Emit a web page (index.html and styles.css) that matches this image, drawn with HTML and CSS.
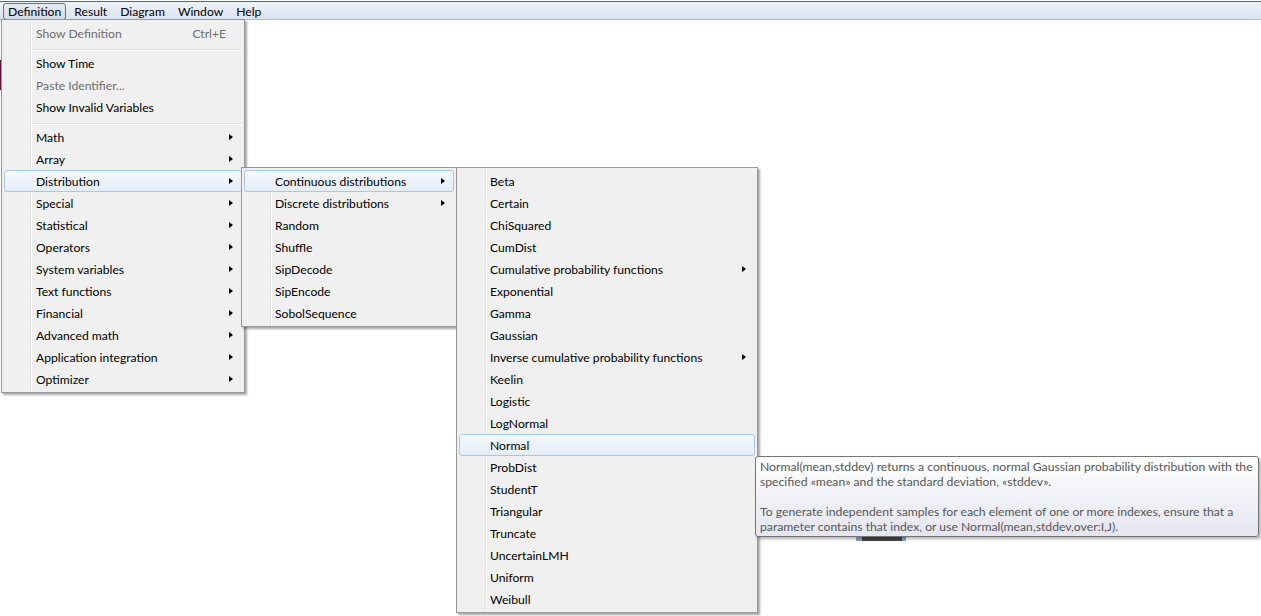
FILE: index.html
```html
<!DOCTYPE html>
<html lang="en">
<head>
    <meta charset="UTF-8">
    <meta name="viewport" content="width=device-width, initial-scale=1.0">
    <title>Definition menu</title>
    <link rel="stylesheet" href="styles.css">
</head>
<body>
    <div class="menubar">
        <div class="mb-item open">Definition</div>
        <div class="mb-item">Result</div>
        <div class="mb-item">Diagram</div>
        <div class="mb-item">Window</div>
        <div class="mb-item">Help</div>
    </div>

    <!-- bits of the diagram window peeking out behind the menus -->
    <div class="bg-strip"></div>
    <div class="bg-node"></div>

    <div class="menu main">
        <div class="item disabled"><span class="label">Show Definition</span><span class="key">Ctrl+E</span></div>
        <div class="sep"></div>
        <div class="item"><span class="label">Show Time</span></div>
        <div class="item disabled"><span class="label">Paste Identifier...</span></div>
        <div class="item"><span class="label">Show Invalid Variables</span></div>
        <div class="sep"></div>
        <div class="item sub"><span class="label">Math</span><span class="arrow"></span></div>
        <div class="item sub"><span class="label">Array</span><span class="arrow"></span></div>
        <div class="item sub hover"><span class="label">Distribution</span><span class="arrow"></span></div>
        <div class="item sub"><span class="label">Special</span><span class="arrow"></span></div>
        <div class="item sub"><span class="label">Statistical</span><span class="arrow"></span></div>
        <div class="item sub"><span class="label">Operators</span><span class="arrow"></span></div>
        <div class="item sub"><span class="label">System variables</span><span class="arrow"></span></div>
        <div class="item sub"><span class="label">Text functions</span><span class="arrow"></span></div>
        <div class="item sub"><span class="label">Financial</span><span class="arrow"></span></div>
        <div class="item sub"><span class="label">Advanced math</span><span class="arrow"></span></div>
        <div class="item sub"><span class="label">Application integration</span><span class="arrow"></span></div>
        <div class="item sub"><span class="label">Optimizer</span><span class="arrow"></span></div>
    </div>

    <div class="menu sub1">
        <div class="item sub hover"><span class="label">Continuous distributions</span><span class="arrow"></span></div>
        <div class="item sub"><span class="label">Discrete distributions</span><span class="arrow"></span></div>
        <div class="item"><span class="label">Random</span></div>
        <div class="item"><span class="label">Shuffle</span></div>
        <div class="item"><span class="label">SipDecode</span></div>
        <div class="item"><span class="label">SipEncode</span></div>
        <div class="item"><span class="label">SobolSequence</span></div>
    </div>

    <div class="menu sub2">
        <div class="item"><span class="label">Beta</span></div>
        <div class="item"><span class="label">Certain</span></div>
        <div class="item"><span class="label">ChiSquared</span></div>
        <div class="item"><span class="label">CumDist</span></div>
        <div class="item sub"><span class="label">Cumulative probability functions</span><span class="arrow"></span></div>
        <div class="item"><span class="label">Exponential</span></div>
        <div class="item"><span class="label">Gamma</span></div>
        <div class="item"><span class="label">Gaussian</span></div>
        <div class="item sub"><span class="label">Inverse cumulative probability functions</span><span class="arrow"></span></div>
        <div class="item"><span class="label">Keelin</span></div>
        <div class="item"><span class="label">Logistic</span></div>
        <div class="item"><span class="label">LogNormal</span></div>
        <div class="item hover"><span class="label">Normal</span></div>
        <div class="item"><span class="label">ProbDist</span></div>
        <div class="item"><span class="label">StudentT</span></div>
        <div class="item"><span class="label">Triangular</span></div>
        <div class="item"><span class="label">Truncate</span></div>
        <div class="item"><span class="label">UncertainLMH</span></div>
        <div class="item"><span class="label">Uniform</span></div>
        <div class="item"><span class="label">Weibull</span></div>
    </div>

    <div class="tooltip">
        <p>Normal(mean,stddev) returns a continuous, normal Gaussian probability distribution with the<br>specified «mean» and the standard deviation, «stddev».</p>
        <p>To generate independent samples for each element of one or more indexes, ensure that a<br>parameter contains that index, or use Normal(mean,stddev,over:I,J).</p>
    </div>
</body>
</html>
```

FILE: styles.css
```css
body {
    margin: 0;
    width: 1261px;
    height: 616px;
    overflow: hidden;
    position: relative;
    background: #fff;
    color: #000;
    font-family: 'Lato', sans-serif;
    font-size: 12.15px;
}

/* top menu bar */
.menubar {
    margin-top: 1px;
    height: 17px;
    border-top: 1px solid #5b6776;
    border-bottom: 1px solid #b7bcc5;
    background: linear-gradient(#eef2f9, #dbe3f3);
    display: flex;
    align-items: flex-end;
    padding-left: 3px;
}
.mb-item {
    height: 15px;
    line-height: 15px;
    padding: 0 4px;
    margin-right: 3px;
    margin-bottom: -1px;
    border: 1px solid transparent;
    border-radius: 3px;
}
.mb-item.open {
    border-color: #6e7177;
    background: linear-gradient(#e6eaf1, #d5dbe5);
}

/* background window fragments */
.bg-strip { position: absolute; left: 0; top: 60px; width: 1px; height: 30px; background: #5c1a36; }
.bg-node {
    position: absolute;
    left: 856px;
    top: 528px;
    width: 40px;
    height: 13px;
    background: #444;
    border-left: 6px solid #8fa3bd;
    border-right: 4px solid #8fa3bd;
}

/* popup menus */
.menu {
    position: absolute;
    padding: 2px;
    border: 1px solid #979797;
    background: linear-gradient(to right, transparent 28px, #e2e3e3 28px 29px, #fff 29px 30px, transparent 30px), #f0f0f0;
    box-shadow: 2px 2px 2px rgba(0, 0, 0, 0.35);
}
.menu.main { left: 1px; top: 19px; width: 238px; }
.menu.sub1 { left: 241px; top: 167px; width: 210px; }
.menu.sub2 { left: 456px; top: 167px; width: 296px; }

.item {
    display: flex;
    align-items: center;
    height: 20px;
    padding-left: 30px;
    border: 1px solid transparent;
    border-radius: 3px;
    white-space: nowrap;
}
.main .item { padding-left: 31px; }
.item .label { flex: 1; }
.item.disabled { color: #6d6d6d; }
.item .key { margin-right: 15px; }
.item .arrow {
    width: 0;
    height: 0;
    margin-right: 8px;
    border-left: 4px solid #000;
    border-top: 3.5px solid transparent;
    border-bottom: 3.5px solid transparent;
}
.item.hover {
    border-color: #a8c6ea;
    background: linear-gradient(#f5f8fd, #e4edf9);
}

.sep {
    height: 1px;
    margin: 5px 0 1px 29px;
    background: #e0e0e0;
    border-bottom: 1px solid #fff;
}

/* tooltip for the hovered item */
.tooltip {
    position: absolute;
    left: 755px;
    top: 456px;
    width: 493px;
    height: 75px;
    padding: 2px 5px 2px 4px;
    border: 1px solid #767676;
    border-radius: 3px;
    background: linear-gradient(#fff, #e4e5f0);
    color: #575757;
    font-size: 12.2px;
    line-height: 15px;
    white-space: nowrap;
    box-shadow: 2px 2px 3px rgba(0, 0, 0, 0.3);
}
.tooltip p { margin: 0 0 15px; }
```
